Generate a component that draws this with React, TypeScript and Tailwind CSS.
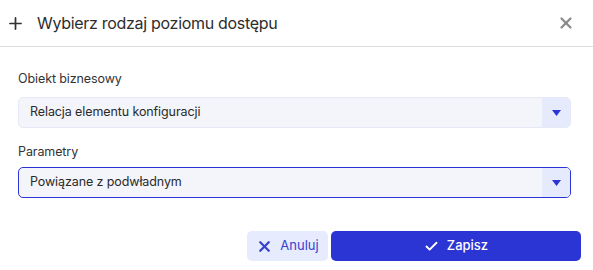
import { Plus, X, Check } from "lucide-react";

const SelectBox = ({ value, focused }: { value: string; focused?: boolean }) => (
  <div
    className={`flex h-[31px] items-stretch rounded-[5px] bg-[#f4f5fa] border ${
      focused ? "border-[#2b35d4]" : "border-[#e6e9f5]"
    }`}>
    <div className="flex-1 flex items-center pl-[11px] text-[12.5px] tracking-[-0.1px] text-[#2a2a2a]">{value}</div>
    <div className="w-[28px] flex items-center justify-center bg-[#e6eafd] rounded-r-[4px]">
      <svg width="9" height="6" viewBox="0 0 9 6">
        <path d="M0 0 H9 L4.5 6 Z" fill="#2b35d4" />
      </svg>
    </div>
  </div>
);

export default function App() {
  return (
    <div
      className="w-[593px] h-[270px] bg-white overflow-hidden"
      style={{ fontFamily: "Inter, 'Noto Sans', sans-serif" }}>
      <div className="h-[47px] flex items-center border-b border-[#dedede]">
        <Plus className="ml-[6px] w-[19px] h-[19px] text-[#333]" strokeWidth={2.2} />
        <span className="ml-[12px] text-[16px] tracking-[-0.3px] text-[#2d2d2d]">
          Wybierz rodzaj poziomu dostępu
        </span>
        <X className="ml-auto mr-[18px] w-[18px] h-[18px] text-[#8a8a8a]" strokeWidth={3} />
      </div>
      <div className="pl-[18px] pr-[22px]">
        <div className="pt-[24px] text-[12.5px] tracking-[-0.1px] text-[#333] leading-[16px]">Obiekt biznesowy</div>
        <div className="mt-[10px]">
          <SelectBox value="Relacja elementu konfiguracji" />
        </div>
        <div className="pt-[16px] text-[12.5px] tracking-[-0.1px] text-[#333] leading-[16px]">Parametry</div>
        <div className="mt-[7px]">
          <SelectBox value="Powiązane z podwładnym" focused />
        </div>
      </div>
      <div className="flex justify-end gap-[3px] pr-[12px] mt-[33px]">
        <button className="w-[81px] h-[30px] flex items-center justify-center gap-[7px] rounded-[5px] bg-[#e6ebfd] text-[#3a40d0] text-[13px]">
          <X className="w-[17px] h-[17px]" strokeWidth={3.2} />
          Anuluj
        </button>
        <button className="w-[250px] h-[30px] flex items-center justify-center gap-[8px] rounded-[5px] bg-[#2b35d4] text-white text-[13px] font-medium">
          <Check className="w-[15px] h-[15px]" strokeWidth={3} />
          Zapisz
        </button>
      </div>
    </div>
  );
}
